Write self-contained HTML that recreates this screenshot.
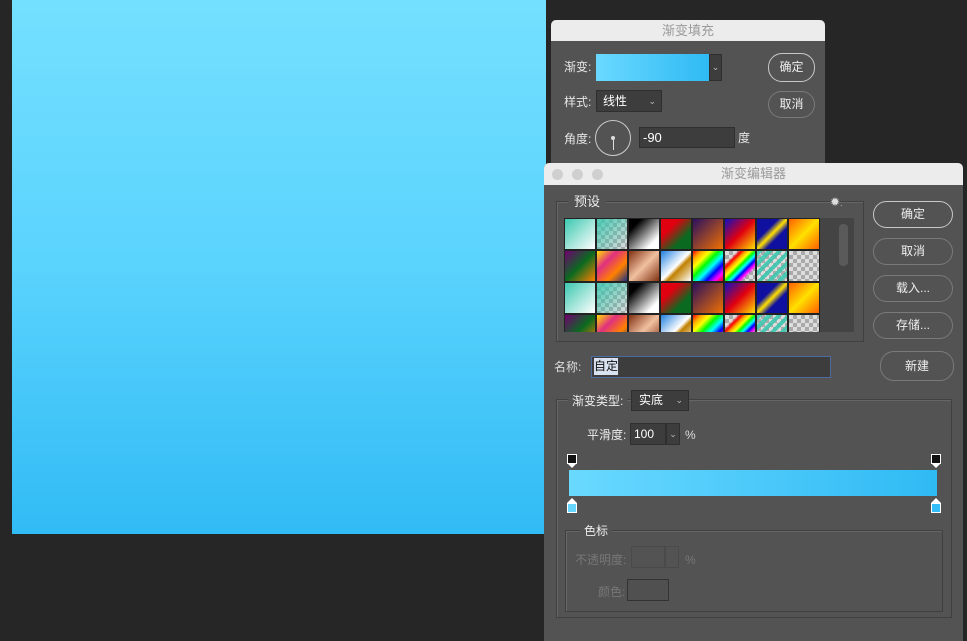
<!DOCTYPE html>
<html><head><meta charset="utf-8">
<style>
*{margin:0;padding:0;box-sizing:border-box}
body{width:967px;height:641px;background:#262626;position:relative;overflow:hidden;font-family:"Liberation Sans","Noto Sans CJK SC",sans-serif;font-size:12px;line-height:14px;color:#e6e6e6}
.a{position:absolute}
.canvas{left:12px;top:0;width:534px;height:534px;background:linear-gradient(#74e0ff,#5ad3fd 50%,#31bbf5)}
.dlg{background:#535353}
.tbar{background:#ececec;color:#9a9a9a;font-size:13px;text-align:center;line-height:21px}
.btn{border:1px solid #c8c8c8;border-radius:14px;color:#eee;text-align:center;font-size:12px}
.btn2{border:1px solid #7a7a7a;border-radius:14px;color:#eee;text-align:center;font-size:12px}
.inp{background:#3d3d3d;border:1px solid #2f2f2f}
.grp{border:1px solid #404040;box-shadow:1px 1px 0 #666 inset}
.cell{position:absolute;width:32px;height:32px;border:1px solid #222}
.chk{background-color:#ddd;background-image:linear-gradient(45deg,#aaa 25%,transparent 25%,transparent 75%,#aaa 75%),linear-gradient(45deg,#aaa 25%,transparent 25%,transparent 75%,#aaa 75%);background-size:8px 8px;background-position:0 0,4px 4px}
.dot{width:11px;height:11px;border-radius:50%;background:#cfcfcf;top:6px}
</style></head><body>
<div class="a canvas"></div>

<div class="a dlg" style="left:551px;top:20px;width:274px;height:145px;border-radius:5px 5px 0 0;overflow:hidden">
  <div class="a tbar" style="left:0;top:0;width:274px;height:21px">渐变填充</div>
  <div class="a" style="left:13px;top:40px">渐变:</div>
  <div class="a" style="left:45px;top:34px;width:113px;height:27px;background:linear-gradient(90deg,#6ad9ff,#2fbaf4)"></div>
  <div class="a inp" style="left:158px;top:34px;width:13px;height:27px;color:#bbb;font-size:9px;text-align:center;line-height:25px">⌄</div>
  <div class="a btn" style="left:217px;top:33px;width:47px;height:29px;line-height:27px">确定</div>
  <div class="a btn2" style="left:217px;top:71px;width:47px;height:27px;line-height:25px">取消</div>
  <div class="a" style="left:13px;top:75px">样式:</div>
  <div class="a inp" style="left:45px;top:70px;width:66px;height:22px;line-height:20px;padding-left:6px;color:#fff">线性<span style="position:absolute;right:5px;font-size:9px;color:#bbb">⌄</span></div>
  <div class="a" style="left:13px;top:112px">角度:</div>
  <div class="a" style="left:44px;top:100px;width:36px;height:36px;border:1px solid #ccc;border-radius:50%"></div>
  <div class="a" style="left:61.5px;top:117px;width:1px;height:13px;background:#ddd"></div>
  <div class="a" style="left:60px;top:116px;width:4px;height:4px;border-radius:50%;background:#ddd"></div>
  <div class="a inp" style="left:88px;top:107px;width:96px;height:21px;line-height:19px;padding-left:3px;color:#fff;font-size:13px">-90</div>
  <div class="a" style="left:187px;top:111px">度</div>
</div>

<div class="a dlg" style="left:544px;top:163px;width:419px;height:478px;border-radius:5px 5px 0 0;overflow:hidden">
  <div class="a tbar" style="left:0;top:0;width:419px;height:22px;line-height:22px">渐变编辑器</div>
  <div class="a dot" style="left:8px"></div><div class="a dot" style="left:28px"></div><div class="a dot" style="left:48px"></div>

  <div class="a grp" style="left:12px;top:38px;width:308px;height:141px"></div>
  <div class="a" style="left:24px;top:32px;background:#535353;padding:0 6px;font-size:13px;color:#eee">预设</div>
  <div class="a" style="left:286px;top:32px;font-size:12px;color:#ddd">✹<span style="font-size:8px">.</span></div>
  <div class="a" style="left:20px;top:55px;width:290px;height:114px;background:#444;overflow:hidden" id="g">
    <div class="a" style="left:275px;top:6px;width:9px;height:42px;border-radius:4px;background:#5a5a5a"></div>
  </div>

  <div class="btn a" style="left:329px;top:38px;width:80px;height:27px;line-height:25px">确定</div>
  <div class="btn2 a" style="left:329px;top:75px;width:80px;height:27px;line-height:25px">取消</div>
  <div class="btn2 a" style="left:329px;top:112px;width:80px;height:27px;line-height:25px">载入...</div>
  <div class="btn2 a" style="left:329px;top:149px;width:80px;height:27px;line-height:25px">存储...</div>
  <div class="btn2 a" style="left:336px;top:188px;width:74px;height:30px;line-height:28px">新建</div>

  <div class="a" style="left:10px;top:197px;color:#ddd">名称:</div>
  <div class="a" style="left:47px;top:193px;width:240px;height:22px;background:#3d3d3d;border:1px solid #4a6aa0"><span style="background:#d8e2f0;color:#111;font-size:12px;line-height:17px;display:inline-block;margin:1px 0 0 2px">自定</span></div>

  <div class="a grp" style="left:12px;top:236px;width:396px;height:219px"></div>
  <div class="a" style="left:24px;top:231px;background:#535353;padding:0 4px;color:#eee">渐变类型:</div>
  <div class="a inp" style="left:87px;top:227px;width:58px;height:21px;line-height:19px;padding-left:7px;color:#fff">实底<span style="position:absolute;right:5px;font-size:9px;color:#bbb">⌄</span></div>
  <div class="a" style="left:43px;top:265px;color:#eee">平滑度:</div>
  <div class="a inp" style="left:86px;top:260px;width:36px;height:22px;line-height:20px;padding-left:3px;color:#fff">100</div>
  <div class="a inp" style="left:122px;top:260px;width:14px;height:22px;font-size:9px;text-align:center;line-height:20px;color:#bbb">⌄</div>
  <div class="a" style="left:141px;top:265px;color:#ddd">%</div>

  <div class="a" style="left:23px;top:291px;width:10px;height:10px;background:#111;border:1px solid #fff"></div>
  <div class="a" style="left:23px;top:300px;width:0;height:0;border-left:5px solid transparent;border-right:5px solid transparent;border-top:5px solid #fff"></div>
  <div class="a" style="left:387px;top:291px;width:10px;height:10px;background:#111;border:1px solid #fff"></div>
  <div class="a" style="left:387px;top:300px;width:0;height:0;border-left:5px solid transparent;border-right:5px solid transparent;border-top:5px solid #fff"></div>
  <div class="a" style="left:25px;top:307px;width:368px;height:26px;background:linear-gradient(90deg,#6ad9ff,#2fbaf4)"></div>
  <div class="a" style="left:23px;top:335px;width:0;height:0;border-left:5px solid transparent;border-right:5px solid transparent;border-bottom:5px solid #fff"></div>
  <div class="a" style="left:23px;top:340px;width:10px;height:10px;background:#66d6fc;border:1px solid #fff"></div>
  <div class="a" style="left:387px;top:335px;width:0;height:0;border-left:5px solid transparent;border-right:5px solid transparent;border-bottom:5px solid #fff"></div>
  <div class="a" style="left:387px;top:340px;width:10px;height:10px;background:#33bcf5;border:1px solid #fff"></div>

  <div class="a grp" style="left:21px;top:367px;width:378px;height:82px"></div>
  <div class="a" style="left:36px;top:361px;background:#535353;padding:0 4px;color:#eee">色标</div>
  <div class="a" style="left:31px;top:390px;color:#777">不透明度:</div>
  <div class="a" style="left:87px;top:383px;width:34px;height:22px;border:1px solid #4a4a4a"></div>
  <div class="a" style="left:121px;top:383px;width:14px;height:22px;border:1px solid #4a4a4a"></div>
  <div class="a" style="left:141px;top:390px;color:#777">%</div>
  <div class="a" style="left:54px;top:422px;color:#777">颜色:</div>
  <div class="a" style="left:83px;top:416px;width:42px;height:22px;border:1px solid #333;background:#505050"></div>
</div>

<script>
var g=document.getElementById('g');
var C=[
'linear-gradient(135deg,#3cc8b0,#fff)',
'CHK:linear-gradient(135deg,rgba(60,200,176,.9),rgba(60,200,176,0))',
'linear-gradient(135deg,#000 20%,#fff 80%)',
'linear-gradient(135deg,#e00010 30%,#0a6a20 70%)',
'linear-gradient(135deg,#2a1060,#f07000)',
'linear-gradient(135deg,#1010c0,#e00010 50%,#ffe000)',
'linear-gradient(135deg,#1010a0 35%,#ffe000 50%,#1010a0 65%)',
'linear-gradient(135deg,#ff6000,#ffe000 50%,#ff6000)',
'linear-gradient(135deg,#700070,#0a6a20 50%,#ff8000)',
'linear-gradient(135deg,#ffe000,#e03080,#ff8000,#203080)',
'linear-gradient(135deg,#803010,#f0c0a0 50%,#803010)',
'linear-gradient(135deg,#2080e0,#fff 50%,#c08000 60%,#fff)',
'linear-gradient(135deg,red,orange,yellow,lime,cyan,blue,magenta,red)',
'CHK:linear-gradient(135deg,transparent 20%,red,orange,yellow,lime,cyan,blue,magenta,transparent 80%)',
'CHK:repeating-linear-gradient(135deg,rgba(60,200,176,.9) 0 4px,transparent 4px 7px)',
'CHK:linear-gradient(#0000,#0000)'];
var html='';
for(var r=0;r<4;r++)for(var c=0;c<8;c++){
 var s=C[(r%2)*8+c];var st='left:'+(c*32)+'px;top:'+(r*32)+'px;';
 if(s.indexOf('CHK:')==0){html+='<div class="cell chk" style="'+st+'"><div style="width:100%;height:100%;background:'+s.slice(4)+'"></div></div>';}
 else html+='<div class="cell" style="'+st+'background:'+s+'"></div>';
}
g.insertAdjacentHTML('afterbegin',html);
</script>
</body></html>
